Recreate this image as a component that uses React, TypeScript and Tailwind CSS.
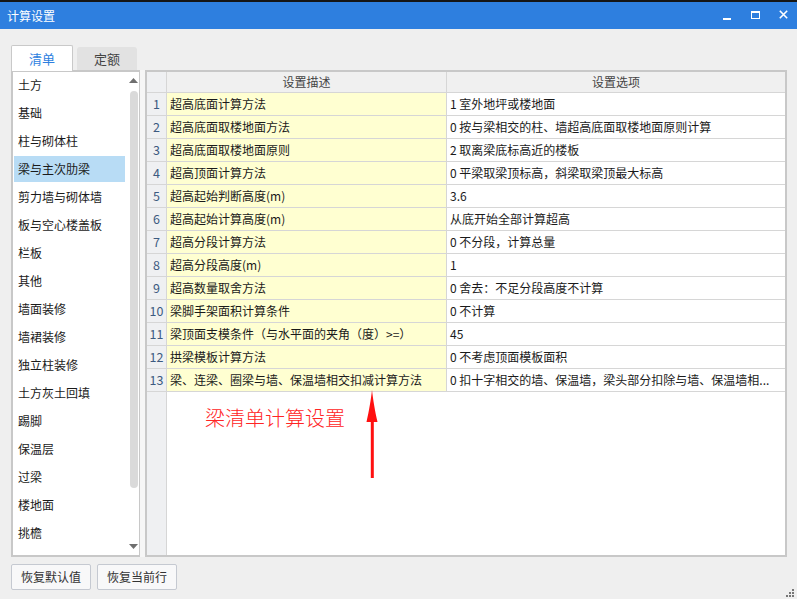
import React from "react";

const listItems = [
  "土方",
  "基础",
  "柱与砌体柱",
  "梁与主次肋梁",
  "剪力墙与砌体墙",
  "板与空心楼盖板",
  "栏板",
  "其他",
  "墙面装修",
  "墙裙装修",
  "独立柱装修",
  "土方灰土回填",
  "踢脚",
  "保温层",
  "过梁",
  "楼地面",
  "挑檐",
];

const rows: [string, string][] = [
  ["超高底面计算方法", "1 室外地坪或楼地面"],
  ["超高底面取楼地面方法", "0 按与梁相交的柱、墙超高底面取楼地面原则计算"],
  ["超高底面取楼地面原则", "2 取离梁底标高近的楼板"],
  ["超高顶面计算方法", "0 平梁取梁顶标高，斜梁取梁顶最大标高"],
  ["超高起始判断高度(m)", "3.6"],
  ["超高起始计算高度(m)", "从底开始全部计算超高"],
  ["超高分段计算方法", "0 不分段，计算总量"],
  ["超高分段高度(m)", "1"],
  ["超高数量取舍方法", "0 舍去：不足分段高度不计算"],
  ["梁脚手架面积计算条件", "0 不计算"],
  ["梁顶面支模条件（与水平面的夹角（度）>=）", "45"],
  ["拱梁模板计算方法", "0 不考虑顶面模板面积"],
  ["梁、连梁、圈梁与墙、保温墙相交扣减计算方法", "0 扣十字相交的墙、保温墙，梁头部分扣除与墙、保温墙相..."],
];

export default function App() {
  return (
    <div
      className="relative w-[797px] h-[599px] overflow-hidden bg-[#efefef] text-[12px] text-[#1a1a1a]"
      style={{ fontFamily: '"Noto Sans CJK SC", "Noto Sans", sans-serif' }}
    >
      <div className="h-[2px] bg-[#151515]" />
      {/* Title bar */}
      <div className="h-[27px] bg-[#2e7fdf] flex items-center pl-[7px] text-white text-[12px]">
        <span className="leading-none">计算设置</span>
        <div className="ml-auto flex items-center h-full">
          <div className="w-[28px] h-full flex items-center justify-center">
            <div className="w-[8px] h-[2px] bg-white mt-[6px]" />
          </div>
          <div className="w-[28px] h-full flex items-center justify-center">
            <div className="w-[9px] h-[8px] border border-white border-t-2 mt-[-2px]" />
          </div>
          <div className="w-[28px] h-full flex items-center justify-center">
            <svg width="9" height="9" viewBox="0 0 9 9" className="mt-[-2px]">
              <path d="M0.8 0.8 L8.2 8.2 M8.2 0.8 L0.8 8.2" stroke="white" strokeWidth="1.6" />
            </svg>
          </div>
        </div>
      </div>

      {/* Tabs */}
      <div className="px-[11px] pt-[15px] flex items-end gap-[4px] h-[41px]">
        <div className="w-[62px] h-[26px] bg-white border border-[#c9c9c9] border-b-0 rounded-t-[2px] flex items-center justify-center text-[#2e7fdf] text-[13px] relative top-[1px]">
          清单
        </div>
        <div className="w-[60px] h-[23px] bg-[#e2e2e2] rounded-t-[3px] flex items-center justify-center text-[#444] text-[13px]">
          定额
        </div>
      </div>

      {/* Panels */}
      <div className="flex h-[487px] pl-[11px] pr-[10px]">
        {/* Left list */}
        <div className="w-[129px] h-full bg-white border-2 border-r border-[#c8c8c8] flex">
          <div className="flex-1 flex flex-col">
            {listItems.map((t, i) => (
              <div
                key={t}
                className={
                  "h-[26px] mb-[2px] ml-[1px] mr-[3px] pl-[4px] flex items-center " +
                  (i === 3 ? "bg-[#b8dcf5]" : "")
                }
              >
                {t}
              </div>
            ))}
          </div>
          <div className="w-[11px] flex flex-col items-center">
            <svg width="9" height="5" viewBox="0 0 9 5" className="mt-[6px]">
              <path d="M0 5 L4.5 0 L9 5 Z" fill="#6f6f6f" />
            </svg>
            <div className="w-[8px] h-[397px] mt-[8px] rounded-[4px] bg-[#dadada]" />
            <svg width="9" height="5" viewBox="0 0 9 5" className="mt-auto mb-[6px]">
              <path d="M0 0 L4.5 5 L9 0 Z" fill="#6f6f6f" />
            </svg>
          </div>
        </div>

        {/* Splitter */}
        <div className="w-[5px] h-full bg-[#f6f6f6]" />

        {/* Table */}
        <div className="flex-1 h-full bg-white border-2 border-[#c8c8c8] flex overflow-hidden">
          <div className="w-[20px] h-full bg-[#eff0f2] border-r border-[#d6d6d6] flex flex-col">
            <div className="h-[21px] border-b border-[#d6d6d6]" />
            {rows.map((_, i) => (
              <div
                key={i}
                className="h-[23px] border-b border-[#d6d6d6] flex items-center justify-center text-[#3c5a80] text-[12.5px]"
              >
                {i + 1}
              </div>
            ))}
          </div>
          <div className="flex-1 flex flex-col min-w-0">
            <div className="h-[21px] flex border-b border-[#d6d6d6] bg-[#f0f0f0] text-[#444]">
              <div className="w-[280px] border-r border-[#d6d6d6] flex items-center justify-center">
                设置描述
              </div>
              <div className="flex-1 flex items-center justify-center">设置选项</div>
            </div>
            {rows.map(([d, o], i) => (
              <div key={i} className="h-[23px] flex border-b border-[#d6d6d6]">
                <div className="w-[280px] shrink-0 bg-[#ffffd1] border-r border-[#d6d6d6] flex items-center pl-[3px] whitespace-nowrap overflow-hidden">
                  {d}
                </div>
                <div className="flex-1 min-w-0 flex items-center pl-[3px] bg-white whitespace-nowrap">
                  {o}
                </div>
              </div>
            ))}
          </div>
        </div>
      </div>

      {/* Buttons */}
      <div className="flex gap-[6px] pl-[11px] pt-[7px]">
        <button className="w-[80px] h-[26px] bg-[#f8f8f9] border border-[#c5c9d1] rounded-[2px] text-[#333] text-[12px] flex items-center justify-center">
          恢复默认值
        </button>
        <button className="w-[80px] h-[26px] bg-[#f8f8f9] border border-[#c5c9d1] rounded-[2px] text-[#333] text-[12px] flex items-center justify-center">
          恢复当前行
        </button>
      </div>

      {/* Resize grip */}
      <svg width="9" height="9" viewBox="0 0 9 9" className="absolute right-[2px] bottom-[1px]">
        <rect x="6" y="0" width="2" height="2" fill="#777" />
        <rect x="3" y="3" width="2" height="2" fill="#777" />
        <rect x="6" y="3" width="2" height="2" fill="#777" />
        <rect x="0" y="6" width="2" height="2" fill="#777" />
        <rect x="3" y="6" width="2" height="2" fill="#777" />
        <rect x="6" y="6" width="2" height="2" fill="#777" />
      </svg>

      {/* Annotation */}
      <div className="absolute left-[205px] top-[404px] text-[20px] leading-[28px] text-[#ff2424] font-light">
        梁清单计算设置
      </div>
      <svg width="16" height="92" viewBox="0 0 16 92" className="absolute left-[364px] top-[389px]">
        <path d="M8 1 C9 10 11 22 13.5 33 L2.5 33 C5 22 7 10 8 1 Z" fill="#ff1010" />
        <rect x="6.8" y="32" width="3" height="57" fill="#ff1010" />
      </svg>
    </div>
  );
}
